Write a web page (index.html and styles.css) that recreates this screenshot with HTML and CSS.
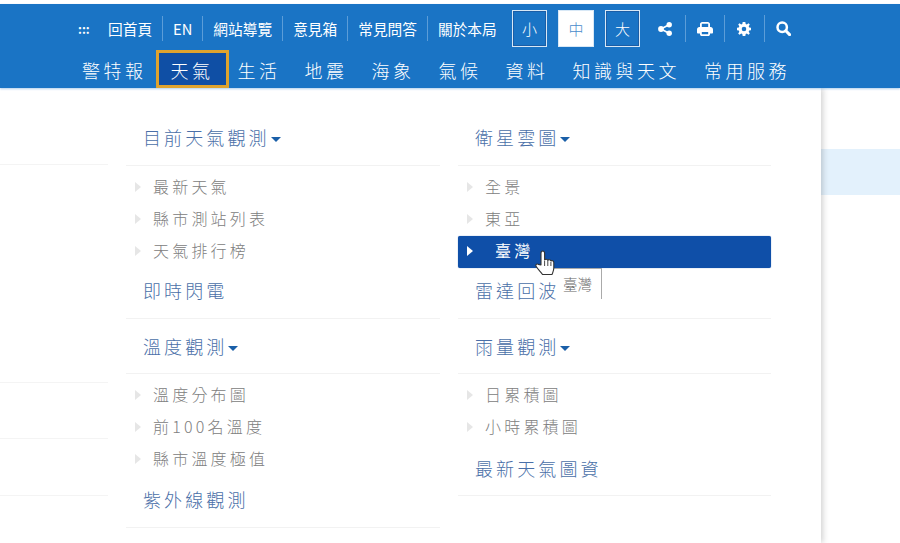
FILE: index.html
```html
<!DOCTYPE html>
<html lang="zh-Hant">
<head>
    <meta charset="UTF-8">
    <meta name="viewport" content="width=device-width, initial-scale=1.0">
    <title>天氣選單</title>
    <link rel="stylesheet" href="styles.css">
</head>
<body>
    <header class="site-header">
        <div class="top-bar">
            <span class="access-key">:::</span>
            <ul class="top-links">
                <li>回首頁</li>
                <li>EN</li>
                <li>網站導覽</li>
                <li>意見箱</li>
                <li>常見問答</li>
                <li>關於本局</li>
            </ul>
            <div class="font-sizes">
                <span class="font-btn">小</span>
                <span class="font-btn active">中</span>
                <span class="font-btn">大</span>
            </div>
            <ul class="tool-icons">
                <li>
                    <svg width="14" height="14" viewBox="0 0 14 14"><circle cx="3" cy="7" r="2.9"/><circle cx="11.2" cy="2.8" r="2.7"/><circle cx="11.2" cy="11.2" r="2.7"/><path d="M3 7l8-4.2M3 7l8 4.2" stroke="#fff" stroke-width="1.6"/></svg>
                </li>
                <li>
                    <svg width="16" height="14" viewBox="0 0 16 14"><path fill-rule="evenodd" d="M3 5V2.2C3 1 4 0 5.2 0h5.6C12 0 13 1 13 2.2V5h.6C15 5 16 6 16 7.4v3c0 .7-.5 1.1-1.1 1.1H13v.7c0 1-.8 1.8-1.8 1.8H4.8c-1 0-1.8-.8-1.8-1.8v-.7H1.100C.5 11.500 0 11.100 0 10.400v-3C0 6 1 5 2.400 5zM4.800 1.800V5h6.400V1.800zM4.800 10v2.200h6.400V10z"/></svg>
                </li>
                <li>
                    <svg width="14" height="14" viewBox="0 0 14 14"><path fill-rule="evenodd" d="M5.700 0h2.600l.4 1.900 1.100.5L11.500 1.300l1.300 1.300-1.100 1.700.5 1.100 1.800.4v2.400l-1.800.4-.5 1.100 1.100 1.700-1.300 1.300-1.700-1.100-1.100.5-.4 1.900H5.700l-.4-1.900-1.100-.5-1.700 1.100-1.300-1.300 1.100-1.700-.5-1.100L0 8.200V5.800l1.800-.4.5-1.100-1.100-1.700 1.300-1.300 1.700 1.100 1.100-.5zM7 4.700a2.300 2.300 0 1 0 0 4.600 2.300 2.300 0 0 0 0-4.600z"/></svg>
                </li>
                <li>
                    <svg width="15" height="15" viewBox="0 0 15 15"><circle cx="6.200" cy="6.200" r="4.700" fill="none" stroke="#fff" stroke-width="2.500"/><path d="M9.800 9.800l3.800 3.800" stroke="#fff" stroke-width="3" stroke-linecap="round"/></svg>
                </li>
            </ul>
        </div>
        <nav class="main-nav">
            <a>警特報</a>
            <a class="current">天氣</a>
            <a>生活</a>
            <a>地震</a>
            <a>海象</a>
            <a>氣候</a>
            <a>資料</a>
            <a>知識與天文</a>
            <a>常用服務</a>
        </nav>
    </header>

    <div class="page-body">
        <div class="dropdown">
            <!-- lines of the page behind the menu -->
            <div class="behind-lines">
                <span class="line-a"></span>
                <span class="line-b"></span>
                <span class="line-c"></span>
                <span class="line-d"></span>
            </div>

            <div class="menu-col">
                <section class="menu-group">
                    <h3 class="menu-title has-caret">目前天氣觀測</h3>
                    <ul class="sub-list">
                        <li>最新天氣</li>
                        <li>縣市測站列表</li>
                        <li>天氣排行榜</li>
                    </ul>
                    <h3 class="menu-title plain">即時閃電</h3>
                </section>
                <section class="menu-group">
                    <h3 class="menu-title has-caret">溫度觀測</h3>
                    <ul class="sub-list">
                        <li>溫度分布圖</li>
                        <li>前100名溫度</li>
                        <li>縣市溫度極值</li>
                    </ul>
                    <h3 class="menu-title plain">紫外線觀測</h3>
                </section>
            </div>

            <div class="menu-col narrow">
                <section class="menu-group">
                    <h3 class="menu-title has-caret">衛星雲圖</h3>
                    <ul class="sub-list">
                        <li>全景</li>
                        <li>東亞</li>
                        <li class="hover">臺灣</li>
                    </ul>
                    <h3 class="menu-title plain">雷達回波</h3>
                </section>
                <section class="menu-group">
                    <h3 class="menu-title has-caret">雨量觀測</h3>
                    <ul class="sub-list">
                        <li>日累積圖</li>
                        <li>小時累積圖</li>
                    </ul>
                    <h3 class="menu-title plain tall">最新天氣圖資</h3>
                </section>
            </div>

            <div class="tooltip">臺灣</div>
            <svg class="hand-cursor" width="22" height="28" viewBox="0 0 22 28">
                <path d="M7 15V3.200C7 1.900 7.800 1 8.800 1s1.800.9 1.800 2.200V10c.3-1 2.900-1 3.200.4.500-1 2.800-.8 3.100.6.700-.7 2.900-.3 2.900 1.500v5.500c0 3-1 4.300-1.800 6.500H8.500C7 22 4.800 20.500 2.200 16.500c-1-1.600.6-3.200 2.100-2.100z" fill="#fff" stroke="#333" stroke-width="1.100" stroke-linejoin="round"/>
                <path d="M10.600 11v5M13.800 11v5M16.900 12v4" stroke="#333" stroke-width=".9" fill="none"/>
            </svg>
        </div>
        <div class="behind-right">
            <div class="behind-band"></div>
        </div>
    </div>
</body>
</html>
```

FILE: styles.css
```css
* {
    box-sizing: border-box;
}

html,
body {
    margin: 0;
    padding: 0;
    height: 543px;
    overflow: hidden;
    background-color: #fff;
    font-family: "Noto Sans CJK TC", "Liberation Sans", sans-serif;
}

ul {
    list-style: none;
    margin: 0;
    padding: 0;
}

h3 {
    margin: 0;
    font-weight: 300;
}

.site-header {
    margin-top: 4px;
    padding-top: 6px;
    height: 84px;
    background-color: #1a74c5;
    color: #fff;
    box-shadow: 0 1px 2px rgba(26, 116, 197, 0.35);
    position: relative;
    z-index: 2;
}

.top-bar {
    display: flex;
    align-items: center;
    height: 37px;
    padding-left: 78px;
}

.access-key {
    width: 20px;
    font-size: 12px;
    font-weight: 700;
}

.top-links {
    display: flex;
}

.top-links li {
    padding: 0 10px;
    height: 25px;
    line-height: 25px;
    font-size: 14.7px;
    border-left: 1px solid #5c9dd8;
}

.top-links li:first-child {
    border-left: none;
}

.font-sizes {
    display: flex;
    gap: 11px;
    margin-left: 5px;
}

.font-btn {
    width: 35.5px;
    height: 37px;
    line-height: 35px;
    text-align: center;
    font-size: 15px;
    font-weight: 300;
    border: 1px solid #d8e8f6;
    box-shadow: inset 0 0 0 1px #1a5da6;
}

.font-btn.active {
    background-color: #fff;
    color: #4a8ccb;
    box-shadow: none;
}

.tool-icons {
    display: flex;
    margin-left: 5px;
}

.tool-icons li {
    display: flex;
    align-items: center;
    justify-content: center;
    width: 39.5px;
    height: 27px;
    border-left: 1px solid #5c9dd8;
}

.tool-icons li:first-child {
    border-left: none;
}

.tool-icons svg {
    fill: #fff;
}

.main-nav {
    display: flex;
    margin-top: 6px;
    padding-left: 70px;
}

.main-nav a {
    padding: 0 12px;
    height: 32px;
    line-height: 34px;
    font-size: 18px;
    font-weight: 300;
    letter-spacing: 3.5px;
    white-space: nowrap;
}

.main-nav a.current {
    background-color: #0f4fa5;
    outline: 3px solid #dfa32e;
}

.page-body {
    display: flex;
    height: 455px;
    background-color: #fff;
}

.dropdown {
    position: relative;
    display: flex;
    width: 821px;
    height: 455px;
    background-color: #fff;
    box-shadow: 2px 0 6px rgba(0, 0, 0, 0.18);
    z-index: 1;
}

.behind-lines {
    width: 108px;
    margin-right: 18px;
}

.behind-lines span {
    display: block;
    height: 1px;
    background-color: #f4f4f4;
}

.line-a {
    margin-top: 76px;
}

.line-b {
    margin-top: 217px;
}

.line-c {
    margin-top: 55px;
}

.line-d {
    margin-top: 56px;
}

.menu-col {
    width: 314px;
    margin-right: 18px;
}

.menu-col.narrow {
    width: 313px;
    margin-right: 0;
}

.menu-group {
    width: 100%;
}

.menu-title {
    padding-left: 17px;
    font-size: 18px;
    letter-spacing: 3.1px;
    color: #4a6fa8;
    border-bottom: 1px solid #f2f2f2;
    white-space: nowrap;
}

.menu-title.has-caret {
    height: 78px;
    line-height: 24px;
    padding-top: 37px;
}

.menu-group + .menu-group .menu-title.has-caret {
    padding-top: 15px;
    height: 55px;
}

.menu-title.has-caret::after {
    content: "";
    display: inline-block;
    margin-left: 1px;
    vertical-align: 3px;
    border-style: solid;
    border-width: 5px 5px 0;
    border-color: #1a5fa8 transparent transparent;
}

.menu-title.plain {
    height: 51px;
    line-height: 24px;
    padding-top: 10px;
}

.menu-group + .menu-group .menu-title.plain {
    height: 52px;
    padding-top: 11px;
}

.menu-group + .menu-group .menu-title.tall {
    padding-top: 12px;
}

.sub-list {
    padding-top: 6px;
}

.sub-list li {
    position: relative;
    height: 32px;
    line-height: 29px;
    padding-left: 27px;
    font-size: 16px;
    font-weight: 300;
    letter-spacing: 3.2px;
    color: #808080;
    border-radius: 2px;
}

.sub-list li::before {
    content: "";
    position: absolute;
    left: 9px;
    top: 10px;
    border-style: solid;
    border-width: 5px 0 5px 6px;
    border-color: transparent transparent transparent #e6e6e6;
}

.sub-list li.hover {
    background-color: #0f4fa8;
    color: #fff;
    font-weight: 400;
    padding-left: 37px;
    box-shadow: 0 0 1px rgba(15, 79, 168, 0.8);
}

.sub-list li.hover::before {
    border-left-color: #fff;
}

.tooltip {
    position: absolute;
    left: 553px;
    top: 180px;
    width: 49px;
    height: 31px;
    padding-left: 10px;
    line-height: 30px;
    font-size: 14.500px;
    font-weight: 300;
    color: #666;
    border-top: 1px solid #aaa;
    border-right: 1px solid #aaa;
}

.hand-cursor {
    position: absolute;
    left: 534px;
    top: 162px;
}

.behind-right {
    flex: 1;
    padding-top: 61px;
}

.behind-band {
    height: 46px;
    background-color: #e3f1fc;
}
```
